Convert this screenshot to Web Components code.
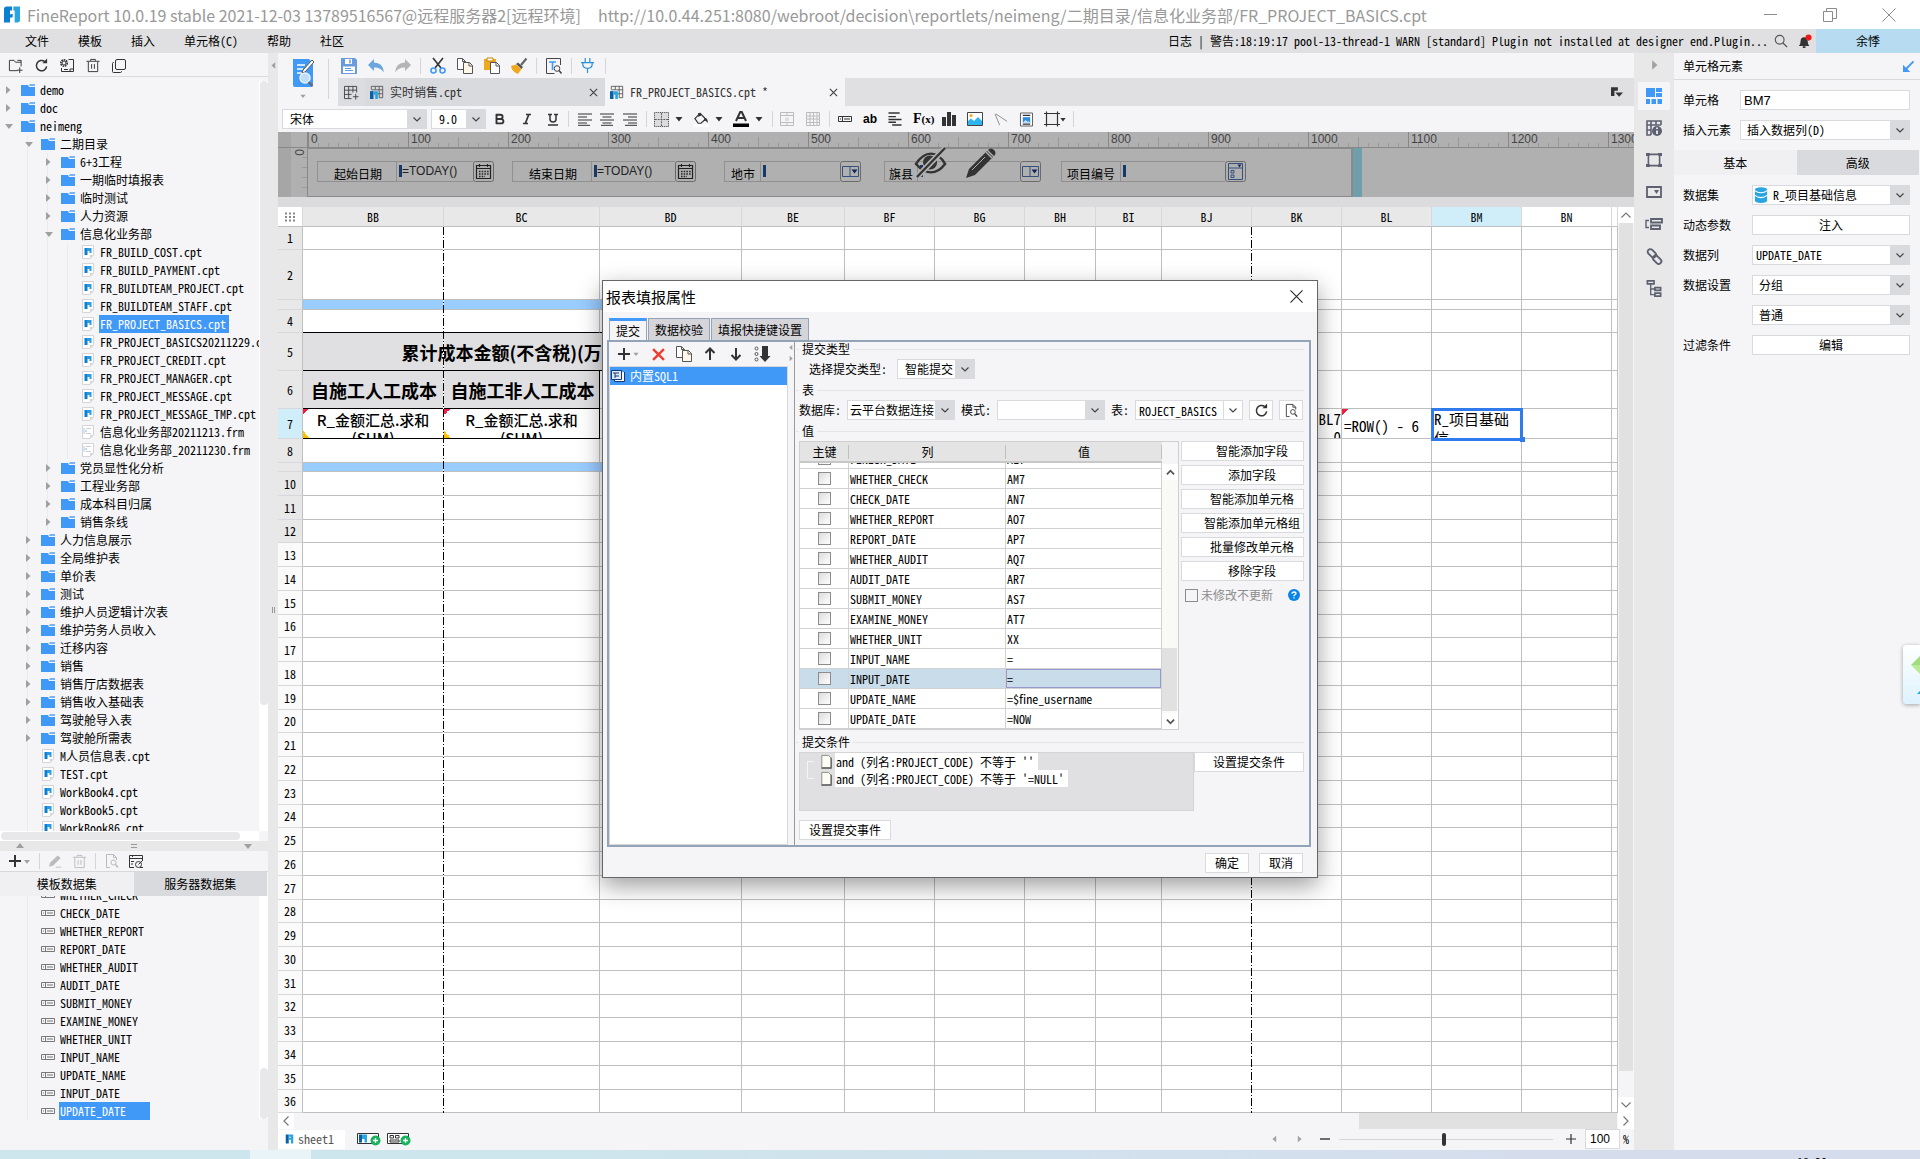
<!DOCTYPE html>
<html lang="zh-CN">
<head>
<meta charset="utf-8">
<title>FineReport</title>
<style>
html,body{margin:0;height:100%}
body{font:12px/18px "Noto Sans CJK SC","Liberation Sans",sans-serif;font-feature-settings:"hwid";color:#000;background:#f5f5f7;overflow:hidden}
</style>
</head>
<body>
<fr-app></fr-app>
<script>
const BASE = `<style>
*{box-sizing:border-box}
:host{display:block}
:host([hidden]){display:none}
button,input,select{font:inherit;color:inherit;margin:0;border-radius:0;outline:none}
.plain{background:none;border:0;padding:0;display:flex;align-items:center;justify-content:center}
.btn{height:20px;line-height:16px;background:#fff;border:1px solid #d9dadd;padding:0;text-align:center;white-space:nowrap;display:flex;align-items:center;justify-content:center}
.box{height:20px;border:1px solid #d9dadd;background:#fff;padding:0 3px;min-width:0}
.sel{display:grid;grid-template:20px / minmax(0,1fr);align-items:center}
.sel>*{grid-area:1/1}
.sel select,.sel input{appearance:none;width:100%;height:20px;border:1px solid #d9dadd;padding:0 20px 0 7px;background:linear-gradient(#d9dadd,#d9dadd) right/19px 100% no-repeat #fff}
.sel fr-icon{justify-self:end;width:20px;pointer-events:none}
.row{display:flex;align-items:center}
i{flex:none}
</style>`;
function define(name, html, init){
  const tpl = document.createElement('template');
  customElements.define(name, class extends HTMLElement{
    connectedCallback(){
      if(this.shadowRoot) return;
      tpl.innerHTML = BASE + (typeof html === 'function' ? html(this) : html);
      this.attachShadow({mode:'open'}).append(tpl.content.cloneNode(true));
      if(init) init(this, this.shadowRoot);
    }
  });
}
const ic = (n, w=16, h=16) => `<fr-icon name="${n}" w="${w}" h="${h}"></fr-icon>`;
const ib = (n, label, w=16, h=16) => `<button class="plain" aria-label="${label}">${ic(n,w,h)}</button>`;
const sel = (id, v, style='') => `<span class="sel" style="${style}"><select id="${id}" aria-label="${id}"><option>${v}</option></select>${ic('chev',8,8)}</span>`;

const S = (c,w=1) => `fill="none" stroke="${c}" stroke-width="${w}"`;
const K = '#333', B = '#4199f7', D = '#5c6070';
const ICONS = {
 logo:['0 0 12 12','<path d="M2 0h4v3H4.500v3l2-.5V8l-2 .5V12H0V2q0-2 2-2z" fill="#0b7fd0"/><path d="M7 0h5v10q0 2-2 2H8V3H7z" fill="#2ba5e0"/>'],
 fr:['0 0 12 12','<path d="M1 0h4v12H1z" fill="#0a5fa8"/><path d="M5 0h6v12H8V7H5V4h3V3H5z" fill="#2ba5e0"/>'],
 chev:['0 0 8 8',`<path d="M.5 2.500 4 6l3.500-3.500" ${S('#444',1.2)}/>`],
 chevUp:['0 0 10 10',`<path d="M.5 7.500 5 3l4.500 4.500" ${S('#777',1.2)}/>`],
 chevDn:['0 0 10 10',`<path d="M.5 2.500 5 7l4.500-4.500" ${S('#777',1.2)}/>`],
 chevUpK:['0 0 10 10',`<path d="M1 7 5 3l4 4" ${S('#555',2)}/>`],
 chevDnK:['0 0 10 10',`<path d="M1 3 5 7l4-4" ${S('#555',2)}/>`],
 chevL:['0 0 10 10',`<path d="M7.500.5 3 5l4.500 4.500" ${S('#777',1.2)}/>`],
 chevR:['0 0 10 10',`<path d="M2.500.5 7 5l-4.500 4.500" ${S('#777',1.2)}/>`],
 triR:['0 0 6 8','<path d="M1 0v8l4.500-4z" fill="#a0a0a0"/>'],
 triL:['0 0 6 8','<path d="M5 0v8L.5 4z" fill="#a0a0a0"/>'],
 triD:['0 0 8 6','<path d="M0 1h8L4 6z" fill="#a0a0a0"/>'],
 triU:['0 0 8 6','<path d="M0 5h8L4 0z" fill="#a0a0a0"/>'],
 drop:['0 0 8 6','<path d="M.5 1h7L4 5.500z" fill="#333"/>'],
 folder:['0 0 14 12',`<path d="M0 1h7l1 2h6v9H0z" fill="${B}"/><path d="M8 1.500 9 0h5v2H8.500z" fill="${B}" opacity=".7"/>`],
 cpt:['0 0 12 14',`<path d="M.5.500h11v9.500L8 13.500H.5z" fill="#fff" stroke="#d4d4d8"/><path d="M11.500 10H8v3.500z" fill="#d5d5d8"/><path d="M2.500 3h3v7h-3z" fill="#0b7fd0"/><path d="M5 3h4.500v5h-2V6H5z" fill="#2b9be8"/>`],
 frm:['0 0 12 14','<path d="M.5.500h11v9.500L8 13.500H.5z" fill="#fff" stroke="#d4d4d8"/><path d="M11.500 10H8v3.500z" fill="#d5d5d8"/><path d="M2 3v6" stroke="#a8cbe8"/><path d="M4 3.500h5M4 8.500h5" stroke="#ccc"/><path d="M4 5v2" stroke="#7db6e6"/>'],
 field:['0 0 14 6','<path d="M.5.500h13v5H.5z" fill="none" stroke="#777"/><path d="M4.500 1v4M6 3h6M2 3h1" stroke="#777"/>'],
 newFolder:['0 0 16 16',`<path d="M10 13.500H1.500v-11h5l1.500 2h6V9M10 2.500h4v2" ${S(K)}/><path d="M12.500 10v6M9.500 13h6" ${S(K)}/>`],
 refresh:['0 0 16 16',`<path d="M13.500 9A5.500 5.500 0 1 1 11.500 3.800" ${S(K,1.6)}/><path d="M9 5.500h5V.5z" fill="${K}"/>`],
 gearDoc:['0 0 16 16',`<circle cx="5" cy="5" r="3.200" ${S(K,1.6)} stroke-dasharray="1.600 .8"/><circle cx="5" cy="5" r="2" ${S(K)}/><path d="M9.500 1.500h5v12H2.500V10M5 11.500h4M11 14v-3h3.500" ${S(K)}/>`],
 trash:['0 0 16 16',`<path d="M1 3.500h14M5.500 3V1.500h5V3M3 4v10.500h10V4M6.500 6.500v5M9.500 6.500v5" ${S(K)}/>`],
 trashG:['0 0 16 16',`<path d="M1 3.500h14M5.500 3V1.500h5V3M3 4v10.500h10V4M6.500 6.500v5M9.500 6.500v5" ${S('#bbb')}/>`],
 copyBox:['0 0 16 16',`<rect x="4.500" y="1.500" width="10" height="10" rx="1.500" ${S(K)}/><path d="M3 4.500H2.500q-1 0-1 1v8q0 1 1 1h7q1 0 1-1V13" ${S(K)}/>`],
 plus:['0 0 14 14',`<path d="M7 1v12M1 7h12" ${S(K,2)}/>`],
 pencilG:['0 0 16 16','<path d="M1 14l1.500-5 8.500-8 3.500 3L6 12.500z" fill="#bbb"/><path d="M9 14.500h6" stroke="#bbb"/>'],
 docSearch:['0 0 16 16',`<path d="M6 14.500H2.500v-13h7l3 3V7M9.500 1.500v3h3" ${S('#bbb')}/><circle cx="9.500" cy="9.500" r="2.500" ${S('#bbb')}/><path d="M11.500 11.500 14 14.500" stroke="#bbb" stroke-width="1.500"/>`],
 docSearchK:['0 0 16 16',`<path d="M6 14.500H2.500v-13h7l3 3V7M9.500 1.500v3h3" ${S('#444')}/><circle cx="9.500" cy="9.500" r="2.500" ${S('#444')}/><path d="M11.500 11.500 14 14.500" stroke="#444" stroke-width="1.500"/>`],
 dbEdit:['0 0 16 16',`<path d="M6 14.500H1.500v-12h13V7M1.500 5.500h13M4 3.500h1M3 8.500h3M3 11h2" ${S(K)}/><circle cx="10.500" cy="11.500" r="3" ${S(K)}/><path d="M10.500 11.500 15 7M12 14.500h3" ${S(K)}/>`],
 save:['0 0 16 16','<path d="M0 0h14l2 2v14H0z" fill="#6a9bdc"/><path d="M4 1h7v5H4z" fill="#fff"/><path d="M9 1.500v4" stroke="#6a9bdc" stroke-width="1.500"/><path d="M2 8.500h12V15H2z" fill="#fff"/><path d="M4 10.500h6M4 12.500h8" stroke="#6a9bdc"/>'],
 undo:['0 0 16 14','<path d="M6 0v3.500q9 0 10 10Q12 8 6 8.500V12L0 6z" fill="#6aa5dc"/>'],
 redo:['0 0 16 14','<path d="M10 0v3.500q-9 0-10 10Q4 8 10 8.500V12l6-6z" fill="#b4b4b6"/>'],
 cut:['0 0 16 16',`<path d="M3 0 11 10M13 0 5 10" ${S(K,1.6)}/><circle cx="3.500" cy="12.500" r="2.500" ${S(B,1.6)}/><circle cx="12.500" cy="12.500" r="2.500" ${S(B,1.6)}/>`],
 copy:['0 0 16 16','<path d="M.5.500h5l3 3v8h-8zM5.500.500v3h3" fill="#fff" stroke="#555"/><path d="M6.500 4.500h6l3 3v8h-9z" fill="#fff8e8" stroke="#555"/><path d="M12 4.500V8h3.500" fill="none" stroke="#555"/>'],
 paste:['0 0 16 16','<path d="M0 1h12v11H0z" fill="#f0a81c"/><path d="M3 0h6v3H3z" fill="#fff" stroke="#c98200"/><path d="M6.500 4.500h6l3 3v8h-9z" fill="#fff" stroke="#555"/><path d="M12 4.500V8h3.500" fill="none" stroke="#555"/>'],
 brush:['0 0 16 16','<path d="M15.500.5 10 7" stroke="#666" stroke-width="2.200"/><path d="M7 4.500 12 9l-1.500 2L5 6z" fill="#555"/><path d="M5 6.500 10.500 11 7 16Q1 14 0 8z" fill="#f0a81c"/>'],
 preview:['0 0 16 16',`<path d="M14.500 7V.5H.5v15h8" ${S('#444')}/><path d="M3 4h7M6.500 4v8" ${S(B,1.6)}/><circle cx="11" cy="10.500" r="2.800" ${S('#444')}/><path d="M13 12.500l2.500 3" stroke="#444" stroke-width="1.500"/>`],
 plug:['0 0 14 16','<path d="M2 5h10v2q0 4-5 4T2 7zM4.500 0v5M9.500 0v5M7 11v5M0 5h14" fill="none" stroke="#2b8fd8" stroke-width="1.300"/>'],
 bigView:['0 0 22 28','<path d="M1 0h16l4 4v22q0 2-2 2H3q-2 0-2-2z" fill="#4199f7"/><path d="M5 6h8M5 10h6M5 14h5" stroke="#fff" stroke-width="1.600"/><path d="M20 1l2 2-9 10-3 1 1-3z" fill="#fff" stroke="#555"/><circle cx="13" cy="19" r="5" fill="#bfdcf8" stroke="#e8f2fc" stroke-width="1.500"/><path d="M16.500 23l4 4" stroke="#666" stroke-width="2"/>'],
 tplAdd:['0 0 16 16',`<path d="M8 14.500H.5V1.500h13V8M.5 5.500h13M5 1.500v13M9.500 1.500V8M.5 10H8" ${S('#444')}/><path d="M12.500 9.500v6M9.500 12.500h6" ${S('#444')}/>`],
 tpl:['0 0 16 16',`<path d="M1.500 5V1.500h13v13h-4M1.500 5.500h13M6 1.500v4M10.500 1.500v13M9 10h5.500" ${S('#555')}/><path d="M0 7h4v9H0z" fill="#0a5fa8"/><path d="M4 7h5v9H6v-5H4z" fill="#2ba5e0"/>`],
 x:['0 0 10 10',`<path d="M1 1l8 8M9 1 1 9" ${S('#444',1.3)}/>`],
 bigX:['0 0 14 14',`<path d="M.5.500l13 13M13.500.5.5 13.500" ${S('#222',1.1)}/>`],
 wx:['0 0 14 14',`<path d="M.5.500l13 13M13.500.5.5 13.500" ${S('#8c8c8c')}/>`],
 wmin:['0 0 14 14',`<path d="M0 6.500h13" ${S('#8c8c8c')}/>`],
 wmax:['0 0 14 14',`<path d="M.5 3.500h9v10h-9zM3.500 3V.5h10v10H10" ${S('#8c8c8c')}/>`],
 tabsMenu:['0 0 14 12','<path d="M0 0h8v4H4v6H0z" fill="#333"/><path d="M5 6h9l-4.500 5z" fill="#333"/>'],
 bold:['0 0 12 12','<path d="M2.500 1v10M2 1.800h4.500a2 2 0 0 1 0 4.200H3M3 6h4.200a2.200 2.200 0 0 1 0 4.400H2" fill="none" stroke="#333" stroke-width="1.900"/>'],
 italic:['0 0 12 12','<path d="M5 1.500h5M2 10.500h5M7.800 1.500l-3.500 9" fill="none" stroke="#333" stroke-width="1.700"/>'],
 under:['0 0 12 13','<path d="M1 1.500h4M7 1.500h4M3 1v5q0 3 3 3t3-3V1M1 12h10" fill="none" stroke="#333" stroke-width="1.500"/>'],
 alL:['0 0 14 12',`<path d="M0 .5h14M0 3.500h9M0 6.500h14M0 9.500h9M0 11.800h12" ${S(K)}/>`],
 alC:['0 0 14 12',`<path d="M0 .5h14M2.500 3.500h9M0 6.500h14M2.500 9.500h9M1 11.800h12" ${S(K)}/>`],
 alR:['0 0 14 12',`<path d="M0 .5h14M5 3.500h9M0 6.500h14M5 9.500h9M2 11.800h12" ${S(K)}/>`],
 border:['0 0 16 16',`<rect width="16" height="16" fill="#dcdcde"/><path d="M.5.500h15v15H.5z" ${S(K)} stroke-dasharray="1 1"/><path d="M8 1v14M1 8h14" ${S('#555')} stroke-dasharray="2 1"/>`],
 fill:['0 0 16 16','<path d="M1.500 7 7 1.500 13 7.500 8 12H5z" fill="none" stroke="#333" stroke-width="1.300"/><path d="M5 5V1h3v3M12 6q4 1 3 6-1-3-4-3z" fill="#333"/><path d="M0 13h16v3H0z" fill="#fff"/>'],
 fontA:['0 0 16 16','<path d="M3 10 7.200 1h1.600L13 10M5 7h6" fill="none" stroke="#333" stroke-width="2"/><path d="M0 12.500h16V16H0z" fill="#000"/>'],
 merge:['0 0 14 14',`<path d="M.5.500h13v13H.5zM.5 3.500h13M.5 10.500h13M7 .5v3M7 10.500v3" ${S('#bcbcc0')}/><path d="M5 5.500h4v3.500H5z" fill="#ddd"/>`],
 table:['0 0 14 14',`<path d="M.5.500h13v13H.5zM.5 4h13M.5 7h13M.5 10.500h13M4 .5v13M7.500.500v13M11 .5v13" ${S('#bcbcc0')}/>`],
 widget:['0 0 14 6',`<path d="M.5.500h13v5H.5zM4.500 1v4M6 3h6M2 3h1" ${S(K)}/>`],
 para:['0 0 14 15',`<path d="M0 1h12M0 5h8M0 8h14M0 11h8M4 14h10" ${S(K,1.5)}/>`],
 chart:['0 0 14 14','<path d="M0 5h4v9H0zM5 0h4v14H5zM10 3h4v11h-4z" fill="#333"/>'],
 image:['0 0 16 14','<path d="M.5.500h15v13H.5z" fill="#fff" stroke="#444"/><path d="M1 13V9l3-2.500L7 9l4-4 4 4v4z" fill="#2fb4f0"/><circle cx="4" cy="3.500" r="1.500" fill="#f5a623"/>'],
 line:['0 0 14 14',`<path d="M0 1l5 12M1 1l12 8" ${S('#888')}/>`],
 docImg:['0 0 14 15','<path d="M.5.500h13v14H.5z" fill="#fff" stroke="#555"/><path d="M3 3h8M3 12.500h8" stroke="#333" stroke-width="1.300"/><path d="M3 5h8v6H3z" fill="#2b8fe0"/><path d="M3 11l3-3 2 2 1-1 2 2z" fill="#cfe6fa"/>'],
 frame:['0 0 16 16',`<path d="M3 3h10v10H3z" fill="#f0f0f2"/><path d="M2.500.500v15M13.500.500v15M0 2.500h16M0 13.500h16" ${S(K,1.2)}/>`],
 search:['0 0 16 16',`<circle cx="6.500" cy="6.500" r="5" ${S('#555',1.3)}/><path d="M10 10l5 5" stroke="#555" stroke-width="1.600"/>`],
 bell:['0 0 16 16','<path d="M1 13q2-2 2-6 0-4 4-4t4 4q0 4 2 6zM5.500 13.500h3v2h-3z" fill="#333"/><circle cx="12" cy="3.500" r="3.500" fill="#f01818"/>'],
 cal:['0 0 21 21',`<rect x=".5" y=".5" width="20" height="20" rx="2" ${S('#6a6a6a')}/><path d="M3.500 4.500h14v13h-14zM3.500 7.500h14M6.500 3v3M14.500 3v3" ${S('#222',1.2)}/><path d="M6 10.500h10M6 13h10M6 15.500h6" stroke="#222" stroke-width="1.500" stroke-dasharray="1.500 1.200"/>`],
 combo:['0 0 21 21',`<rect x=".5" y=".5" width="20" height="20" rx="2" ${S('#6a6a6a')}/><path d="M2.500 5.500h16v10h-16zM10 5.500v10" ${S('#34507c')}/><path d="M11.500 8.500h6l-3 4z" fill="#14245c"/>`],
 tree:['0 0 21 21',`<rect x=".5" y=".5" width="20" height="20" rx="2" ${S('#6a6a6a')}/><path d="M3.500 2.500h14v16h-14zM3.500 7h14" ${S('#34507c')}/><path d="M6 9.500h3v2.500H6zM6 14h3v2.500H6z" ${S('#34507c')}/><path d="M12.500 3.500h4l-2 3z" fill="#14245c"/>`],
 eye:['0 0 34 32','<path d="M1 17Q8 6 17 6t15 11q-7 9-15 9T1 17z" fill="none" stroke="#333" stroke-width="2.600"/><circle cx="16" cy="15.500" r="7.500" fill="#333"/><path d="M32 0 2 31" stroke="#b0b0b0" stroke-width="6"/><path d="M32 0 2 31" stroke="#333" stroke-width="2.400"/>'],
 pen:['0 0 30 30','<path d="M0 30l3-9L21 3l6 6L9 27z" fill="#333"/><path d="M22 2q3-3 6 0 3 3 0 6z" fill="#333"/><path d="M20 4l6 6" stroke="#b0b0b0" stroke-width="1.500"/><path d="M6 22 19 9" stroke="#b0b0b0"/>'],
 dots:['0 0 12 10','<path d="M1 1.500h10M1 5h10M1 8.500h10" stroke="#888" stroke-width="2" stroke-dasharray="2 2"/>'],
 rCell:['0 0 16 16',`<path d="M0 0h9v9H0zM10 0h6v4h-6zM10 5h6v4h-6zM0 11h4v5H0zM5.500 11H10v5H5.500zM11.500 11H16v5h-4.500z" fill="${B}"/>`],
 rInfo:['0 0 16 16',`<path d="M15 5V1H1v14h4M1 5h14M5 1v14M10 1v4M1 10h4" ${S(D,1.6)}/><circle cx="11" cy="11" r="5" fill="${D}"/><path d="M11 10.500v3.500M11 7.500v1.500" stroke="#fff" stroke-width="1.600"/>`],
 rFloat:['0 0 16 16',`<path d="M2.500 2.500h11v11h-11z" ${S(D,1.8)}/><path d="M0 1h4v3H0zM12 1h4v3h-4zM0 12h4v3H0zM12 12h4v3h-4z" fill="${D}"/><path d="M3.500 3.500h9v9h-9z" fill="#e8e8e8"/>`],
 rWidget:['0 0 16 12',`<path d="M1 1h14v10H1z" ${S(D,1.8)}/><path d="M8 4h5l-2.500 4z" fill="${D}"/>`],
 rCond:['0 0 18 12',`<path d="M6 1h11v3.500H6zM6 7.500h9V11H6z" ${S(D,1.8)}/><path d="M4 2.500H1v7h3" ${S(D,1.4)}/>`],
 rLink:['0 0 16 16',`<rect x="1" y="2.500" width="9" height="5" rx="2.500" transform="rotate(45 5.500 5)" ${S(D,1.8)}/><rect x="6" y="8.500" width="9" height="5" rx="2.500" transform="rotate(45 10.500 11)" ${S(D,1.8)}/>`],
 rTree:['0 0 16 18',`<path d="M1 1h7v3H1zM9 8h6v3H9zM9 14h6v3H9z" ${S(D,1.8)}/><path d="M4.500 4v11.500H9M4.500 9.500H9" ${S(D,1.4)}/>`],
 expand:['0 0 12 12',`<path d="M11.500.5 3 9" ${S(B,2)}/><path d="M0 12V4l8 8z" fill="${B}"/>`],
 db:['0 0 16 18','<path d="M1 3q0-3 7-3t7 3v12q0 3-7 3t-7-3z" fill="#2ba5e0"/><path d="M1 4q3 2.500 7 2.500T15 4M1 9.500Q4 12 8 12t7-2.500" fill="none" stroke="#fff" stroke-width="1.200"/>'],
 redX:['0 0 12 12','<path d="M1 1l10 10M11 1 1 11" stroke="#f03b30" stroke-width="2.200"/>'],
 up:['0 0 12 14','<path d="M6 2v11" stroke="#333" stroke-width="2"/><path d="M1.500 6 6 1.500 10.500 6" fill="none" stroke="#333" stroke-width="2"/>'],
 down:['0 0 12 14','<path d="M6 1v11" stroke="#333" stroke-width="2"/><path d="M1.500 8 6 12.500 10.500 8" fill="none" stroke="#333" stroke-width="2"/>'],
 sort:['0 0 16 16',`<circle cx="2.500" cy="2.500" r="1.500" ${S('#555')}/><circle cx="2.500" cy="8" r="1.500" ${S('#555')}/><circle cx="2.500" cy="13.500" r="1.500" ${S('#555')}/><path d="M8 0h6v10h2.500L11 16 5.500 10H8z" fill="#333"/>`],
 sql:['0 0 14 12','<path d="M3.500 3v8.500h10V2" fill="#fff" stroke="#123a7a"/><path d="M.5.500h10v9H.5z" fill="#dfeafc" stroke="#123a7a"/><path d="M2 3h6M4 3v5M4 6h4" stroke="#123a7a"/>'],
 page:['0 0 12 16','<path d="M1.500 1.500h7l3 3v10h-10z" fill="#fdfdf4" stroke="#8c8c84"/><path d="M11.500 4v11H1" stroke="#555" fill="none" stroke-width="1.200"/>'],
 help:['0 0 12 12','<circle cx="6" cy="6" r="6" fill="#0a84e8"/><path d="M4 4.800q0-1.800 2-1.800t2 1.600q0 1-2 1.900v.7M6 8.300v1.300" fill="none" stroke="#fff" stroke-width="1.300"/>'],
 addFr:['0 0 24 14','<path d="M.5 1.500h21v10H.5z" fill="#fff" stroke="#333"/><path d="M2 2.500h3v8H2z" fill="#0a5fa8"/><path d="M5 2.500h5v8H7.500V7H5z" fill="#2ba5e0"/><circle cx="18.500" cy="8.500" r="5" fill="#16b25c"/><path d="M18.500 6v5M16 8.500h5" stroke="#fff" stroke-width="1.300"/>'],
 addFrm:['0 0 24 14','<path d="M.5 1.500h21v10H.5z" fill="#fff" stroke="#333"/><path d="M3 3.500h3.500V6H3zM8.500 3.500H12V6H8.500zM3 8h9v2H3z" fill="none" stroke="#333"/><circle cx="18.500" cy="8.500" r="5" fill="#16b25c"/><path d="M18.500 6v5M16 8.500h5" stroke="#fff" stroke-width="1.300"/>'],
 minus:['0 0 10 10',`<path d="M0 5h10" ${S(K,1.4)}/>`],
 add:['0 0 10 10',`<path d="M0 5h10M5 0v10" ${S(K,1.2)}/>`],
 gem:['0 0 9 44','<path d="M0 9l9-9v9z" fill="#a3dc7c"/><path d="M0 9h9v9z" fill="#b8ec94"/><path d="M6 38l3-3v3z" fill="#14a8f0"/>']
};
customElements.define('fr-icon', class extends HTMLElement{
  connectedCallback(){
    if(this.shadowRoot) return;
    const [vb, body] = ICONS[this.getAttribute('name')];
    this.attachShadow({mode:'open'}).innerHTML = `<style>:host{display:inline-flex;align-items:center;justify-content:center;flex:none}svg{display:block;overflow:visible}</style><svg aria-hidden="true" width="${this.getAttribute('w')}" height="${this.getAttribute('h')}" viewBox="${vb}">${body}</svg>`;
  }
});

define('title-bar', `<style>
:host{display:flex;align-items:center;height:29px;background:#fff;padding:0 24px 0 4px;color:#999;font:16px/28px "Noto Sans CJK SC",sans-serif;font-feature-settings:normal;white-space:pre}
.t{margin:0 17px 0 7px}.w{margin-left:auto;gap:45px}
</style>${ic('logo',16,17)}<span class="t">FineReport 10.0.19 stable 2021-12-03 13789516567@远程服务器2[远程环境]</span><span>http://10.0.44.251:8080/webroot/decision\\reportlets/neimeng/二期目录/信息化业务部/FR_PROJECT_BASICS.cpt</span>
<div class="row w">${ib('wmin','最小化',14,14)}${ib('wmax','还原',14,14)}${ib('wx','关闭',14,14)}</div>`);

define('menu-bar', `<style>
:host{display:flex;align-items:center;height:24px;background:#e0e0e2;white-space:pre}
nav{display:flex;gap:29px;padding-left:25px}
.log{margin-left:auto}
.ics{gap:10px;padding:0 4px 0 6px}
.user{width:104px;height:24px;background:#b7dcf2}
</style><nav>${['文件','模板','插入','单元格(C)','帮助','社区'].map(t=>`<button class="plain">${t}</button>`).join('')}</nav>
<span class="log">日志 | 警告:18:19:17 pool-13-thread-1 WARN [standard] Plugin not installed at designer end.Plugin...</span>
<div class="row ics">${ib('search','搜索',14,14)}${ib('bell','消息',14,15)}</div><button class="plain user">余悸</button>`);

const ROW = `<style>
.r{display:flex;align-items:center;height:18px;flex:none;white-space:nowrap;padding-left:calc(var(--l)*20px);background:repeating-linear-gradient(to right,transparent 0 7px,#ebebee 7px 8px,transparent 8px 20px) 20px 0/calc(var(--l)*20px) 100% no-repeat}
.r>i{width:21px;display:flex;padding-left:5px}.r>fr-icon{width:14px}
.r>span{margin-left:4px;padding:0 3px 0 1px;height:18px}
.on>span{background:#4199f7;color:#fff}
.vs{width:9px;flex:none;background:#fff;display:flex}.vs>b{flex:1;background:#e8e8ea;border-radius:4px;margin-left:1px}
</style>`;
const TREE = `0r demo|0r doc|0d neimeng|1d 二期目录|2r 6+3工程|2r 一期临时填报表|2r 临时测试|2r 人力资源|2d 信息化业务部|3c FR_BUILD_COST.cpt|3c FR_BUILD_PAYMENT.cpt|3c FR_BUILDTEAM_PROJECT.cpt|3c FR_BUILDTEAM_STAFF.cpt|3c*FR_PROJECT_BASICS.cpt|3c FR_PROJECT_BASICS20211229.cpt|3c FR_PROJECT_CREDIT.cpt|3c FR_PROJECT_MANAGER.cpt|3c FR_PROJECT_MESSAGE.cpt|3c FR_PROJECT_MESSAGE_TMP.cpt|3f 信息化业务部20211213.frm|3f 信息化业务部_20211230.frm|2r 党员显性化分析|2r 工程业务部|2r 成本科目归属|2r 销售条线|1r 人力信息展示|1r 全局维护表|1r 单价表|1r 测试|1r 维护人员逻辑计次表|1r 维护劳务人员收入|1r 迁移内容|1r 销售|1r 销售厅店数据表|1r 销售收入基础表|1r 驾驶舱导入表|1r 驾驶舱所需表|1c M人员信息表.cpt|1c TEST.cpt|1c WorkBook4.cpt|1c WorkBook5.cpt|1c WorkBook86.cpt`.split('|').map(s=>{
  const k=s[1], arrow={r:ic('triR',6,8),d:ic('triD',8,6)}[k]||'', icon=k=='c'?ic('cpt',12,14):k=='f'?ic('frm',12,14):ic('folder',14,12);
  return `<div class="r ${s[2]=='*'?'on':''}" style="--l:${s[0]}"><i>${arrow}</i>${icon}<span>${s.slice(3)}</span></div>`;}).join('');
define('file-tree', `${ROW}<style>
:host{display:flex;flex-direction:column;min-height:0;background:#f5f5f7}
.tb{height:24px;padding:2px 0 0 2px;border-bottom:1px solid #dadadc;flex:none}
.tb button{width:26px}
.mid{flex:1;display:flex;min-height:0}
.list{flex:1;min-width:0;overflow:hidden;padding-top:4px}
.vs{padding-bottom:126px;margin-top:4px}
.hs{height:10px;flex:none;background:#fff;margin-right:9px;padding:1px 19px 1px 1px;display:flex}.hs b{flex:1;background:#e8e8ea;border-radius:4px}
</style>
<div class="row tb">${ib('newFolder','新建文件夹',17,15)}${ib('refresh','刷新',15,15)}${ib('gearDoc','模板管理')}${ib('trash','删除',16,15)}${ib('copyBox','复制')}</div>
<div class="mid"><div class="list">${TREE}</div><div class="vs"><b></b></div></div><div class="hs"><b></b></div>`);

define('dataset-panel', `${ROW}<style>
:host{display:flex;flex-direction:column;height:309px;flex:none;background:#f5f5f7}
.split{height:10px;background:#e8e8e8;justify-content:space-between;padding:0 16px;flex:none;color:#999}
.split b{width:6px;height:4px;border:solid #999;border-width:1px 0}
.tb{height:21px;padding-left:8px;border-bottom:1px solid #d8d8da;flex:none}
.s{width:1px;height:16px;background:#d5d5d8;margin:0 8px}
.tabs{display:grid;grid-template-columns:1fr 1fr;margin-right:1px;flex:none;height:24px}
.tabs button{background:#f0f0f2}.tabs button+button{background:#d9dadd}
.mid{flex:1;display:flex;min-height:0}
.list{flex:1;display:flex;flex-direction:column;justify-content:flex-end;overflow:hidden;padding-bottom:30px;min-width:0}
.vs{padding:172px 0 0;margin-bottom:31px}
.on>span{width:91px}
</style>
<div class="row split">${ic('triU',8,6)}<b></b>${ic('triD',8,6)}</div>
<div class="row tb">${ib('plus','添加',14,14)}<i style="width:2px"></i>${ic('triD',6,5)}<i class="s" style="margin:0 8px 0 9px"></i>${ib('pencilG','编辑',14,15)}<i style="width:10px"></i>${ib('trashG','删除',15,15)}<i class="s"></i>${ib('docSearch','预览')}<i style="width:8px"></i>${ib('dbEdit','连接')}</div>
<div class="tabs" role="tablist"><button class="plain" role="tab">模板数据集</button><button class="plain" role="tab">服务器数据集</button></div>
<div class="mid"><div class="list">${['WHETHER_CHECK','CHECK_DATE','WHETHER_REPORT','REPORT_DATE','WHETHER_AUDIT','AUDIT_DATE','SUBMIT_MONEY','EXAMINE_MONEY','WHETHER_UNIT','INPUT_NAME','UPDATE_NAME','INPUT_DATE','UPDATE_DATE'].map((t,i)=>`<div class="r ${i==12?'on':''}" style="--l:1"><i></i>${ic('field',14,6)}<span>${t}</span></div>`).join('')}</div><div class="vs"><b></b></div></div>`);

define('editor-toolbar', `<style>
:host{display:flex;flex-direction:column;background:#f5f5f7}
.top{display:grid;grid-template-columns:60px minmax(0,1fr);height:53px}
.view{display:grid;grid-template-columns:50px 1px;align-items:start;padding-top:6px}
.view>span{display:flex;flex-direction:column;align-items:center;gap:7px}
.view>b{width:1px;height:40px;background:#d5d5d8}
.t1{height:25px;padding-left:3px;gap:11px}
.s{width:1px;height:16px;background:#d5d5d8}
.tabs{display:flex;height:28px;background:#e0e0e2}
.tabs>span{display:flex;align-items:center;gap:6px;padding:0 7px 0 5px;width:240px;background:#d9dadd;color:#333}
.tabs>span button{margin-left:auto}
.tabs .new{width:27px;background:#dcdde0;height:28px}
.tabs .cur{background:#f5f5f7}
.menu{margin:0 11px 0 auto}
.fmt{height:26px;padding-left:4px}
.ab{font:bold 12px/18px "Liberation Sans";font-feature-settings:normal}.fx{font:bold 14px/18px "Liberation Serif";font-feature-settings:normal}
.fx small{font-size:11px}
</style>
<div class="top"><div class="view"><span>${ib('bigView','模板视图',22,28)}${ic('triD',6,4)}</span><b></b></div>
<div><div class="row t1">${ib('save','保存',16,16)}${ib('undo','撤销',16,14)}${ib('redo','重做',16,14)}<i class="s" style="margin:0 -2px"></i>${ib('cut','剪切')}${ib('copy','复制')}${ib('paste','粘贴')}${ib('brush','格式刷')}<i class="s" style="margin:0 -2px"></i>${ib('preview','预览')}<i class="s" style="margin:0 -2px"></i>${ib('plug','插件',13,15)}<i class="s"></i></div>
<div class="tabs"><button class="plain new" aria-label="新建模板">${ic('tplAdd',15,15)}</button><span>${ic('tpl',14,14)}实时销售.cpt${ib('x','关闭',9,9)}</span><span class="cur">${ic('tpl',14,14)}FR_PROJECT_BASICS.cpt *${ib('x','关闭',9,9)}</span><button class="plain menu" aria-label="模板列表">${ic('tabsMenu',12,11)}</button></div></div></div>
<div class="row fmt">${sel('字体','宋体','width:145px')}<i style="width:4px"></i>${sel('字号','9.0','width:55px')}
${[['bold','加粗',12,12,8],['italic','斜体',12,12,15],['under','下划线',12,13,14],0,['alL','左对齐',14,13,9],['alC','居中',14,13,8],['alR','右对齐',14,13,9],0,['border','边框',15,15,7,1],['fill','填充',16,15,10,1],['fontA','字体颜色',16,16,10,1],0,['merge','合并',14,14,7],['table','取消合并',14,14,12],0,['widget','控件',14,6,8]].map(a=>a?`<i style="width:${a[4]}px"></i>${ib(a[0],a[1],a[2],a[3])}${a[5]?'<i style="width:6px"></i>'+ic('drop',8,6):''}`:'<i class="s" style="margin-left:9px"></i>').join('')}
<i style="width:11px"></i><button class="plain ab">ab</button><i style="width:11px"></i>${ib('para','富文本',14,14)}<i style="width:11px"></i><button class="plain fx">F<small>(x)</small></button><i style="width:8px"></i>${ib('chart','图表',14,14)}<i style="width:11px"></i>${ib('image','图片',16,14)}<i style="width:12px"></i>${ib('line','斜线',13,13)}<i style="width:12px"></i>${ib('docImg','子报表',13,15)}<i style="width:11px"></i>${ib('frame','悬浮元素',16,16)}${ic('drop',6,5)}<i class="s" style="margin-left:7px"></i></div>`);

const P = (l,lw,v,fw,icon,gap,pr) => `<label class="row" style="margin-left:${gap}px"><span style="width:${lw}px;padding-right:${pr}px">${l}</span><b></b><input value="${v}" style="width:${fw-5}px">${ic(icon,21,21)}</label>`;
define('param-pane', `<style>
:host{display:grid;grid-template:16px 49px / 30px minmax(0,1fr);background:#b0b0b0;border-bottom:10px solid #dbdbde;overflow:hidden}
.c{background:linear-gradient(to right,#a6a6a6 0 13px,transparent 13px);border-bottom:1px solid #888;border-right:1px solid #888}
.h{display:flex;overflow:hidden;border-bottom:1px solid #888}
.h span{flex:none;width:100px;height:16px;padding-left:3px;font:12px/15px "Liberation Sans";font-feature-settings:normal;color:#444;background:linear-gradient(#888,#888) 0 0/1px 100% no-repeat,linear-gradient(#999,#999) 50px 5px/1px 11px no-repeat,repeating-linear-gradient(to right,#999 0 1px,transparent 1px 10px) 0 11px/100% 5px no-repeat}
.v{background:linear-gradient(to right,#a6a6a6 0 13px,transparent 13px);display:flex;justify-content:flex-end;border-right:1px solid #888}
.v span{writing-mode:vertical-rl;width:17px;font:12px/17px "Liberation Sans";color:#444;padding-top:1px;background:repeating-linear-gradient(to bottom,transparent 0 9px,#999 9px 10px) right/5px 100% no-repeat}
.p{position:relative;display:flex}
.form{width:1045px;flex:none;border:solid #8a8a8a;border-width:1px 2px 1px 0;padding:12px 0 0 9px;display:flex;align-items:flex-start}
.t{width:9px;background:#6f9faa;height:100%}
label{height:21px}
label span{height:21px;line-height:24px;border:1px solid #909090;display:block;text-align:right;white-space:nowrap}
label b{width:5px;height:21px;border:solid #909090;border-width:1px 0;background:linear-gradient(#173a6a,#173a6a) 2px 3px/3px 12px no-repeat}
input{height:21px;border:solid #909090;border-width:1px 0;background:none;padding:0 0 2px 0;font:12px "Liberation Sans";font-feature-settings:normal;color:#222;min-width:0}
.o{position:absolute;display:flex;gap:19px;left:607px;top:0}
</style>
<div class="c"></div><div class="h">${Array.from({length:14},(_,i)=>`<span>${i*100}</span>`).join('')}</div>
<div class="v"><span>0</span></div>
<div class="p"><div class="form">${P('起始日期',80,'=TODAY()',76,'cal',0,14)}${P('结束日期',80,'=TODAY()',83,'cal',18,14)}${P('地市',37,'',79,'combo',28,5)}${P('旗县',34,'',102,'combo',23,4)}${P('项目编号',60,'',104,'tree',20,5)}</div><div class="t"></div>
<div class="o">${ic('eye',32,30)}${ic('pen',30,30)}</div></div>`);

const COLS = [['BB',141],['BC',156],['BD',142],['BE',103],['BF',90],['BG',90],['BH',71],['BI',66],['BJ',90],['BK',90],['BL',90],['BM',90],['BN',90],['',6]];
const HS = [23,50,10,23,38,38,30,24,9,24,24,23,24,24,24,23,24,24,24,23,24,24,24,23,24,24,24,23,24,24,24,23,24,24,24,23];
define('report-sheet', ()=>{
  const cell = (r,c) => {
    if(r==3||r==9) return c<9?'<td class="band"></td>':'<td></td>';
    if(r==5){ if(c==0) return '<td class="h5" colspan="3">累计成本金额(不含税)(万元)</td>'; if(c<3) return ''; }
    if(r==6&&c<2) return `<td class="h6">${['自施工人工成本','自施工非人工成本'][c]}</td>`;
    if(r==7&&c<2) return '<td class="v7"><div>R_金额汇总.求和<br>(SUM)</div></td>';
    if(r==7&&c==9) return '<td class="k"><div>BL7<br>0</div></td>';
    if(r==7&&c==10) return '<td class="l"><div>=ROW() - 6</div></td>';
    if(r==7&&c==11) return '<td class="m"><div>R_项目基础<br>信</div></td>';
    return '<td></td>';
  };
  return `<style>
:host{display:flex;flex:1;min-height:0;background:#f5f5f7}
.view{flex:1;position:relative;overflow:hidden;min-width:0}
table{border-collapse:separate;border-spacing:0;table-layout:fixed;width:1340px;background:#fff}
td,th{padding:0;border:solid #bfbfbf;border-width:0 1px 1px 0;overflow:hidden}
th{font-weight:400;line-height:16px;background:#e8e8e8;border-color:#d8d8dc}
thead th{border-bottom-color:#bfbfbf;height:20px;padding-top:1px}
tbody th{border-right-color:#bfbfbf;padding-left:0}
tbody tr:nth-child(n+13) th{background:#fafafa}
thead th:first-child,thead th:nth-child(n+14){background:#fff}
thead th:nth-child(13),tbody tr:nth-child(7) th{background:#cfeefa}
td div{overflow:hidden}
.band{background:#99ccff;border-right-color:#99ccff}
.h5,.h6{background:#e0e0e2;font:bold 18px/24px "Noto Sans CJK SC",sans-serif;font-feature-settings:normal;text-align:center;border-color:#000;white-space:nowrap}
.h5{padding-right:16px}
.h6{padding-left:2px}
tr:nth-child(4) td:nth-child(-n+4){border-bottom-color:#000}
.v7{border-color:#000;font:500 15px/18px "Noto Sans CJK SC",sans-serif;font-feature-settings:normal;text-align:center;white-space:nowrap;background:linear-gradient(135deg,#f02040 50%,transparent 50%) 0 0/6px 6px no-repeat,linear-gradient(45deg,#ffc000 50%,transparent 50%) 0 100%/7px 7px no-repeat}
.v7 div{height:29px;padding-top:2px}
.k div,.m div,.l div{font-size:15px;line-height:18px;height:29px}
.k div{text-align:right;padding-top:1px}
.l div{padding:7px 0 0 2px;line-height:19px}.l{background:linear-gradient(135deg,#f02040 50%,transparent 50%) 0 0/6px 6px no-repeat}
.m div{padding:0 0 0 2px;line-height:19px}
.guide{position:absolute;top:20px;bottom:0;width:1px;background:repeating-linear-gradient(#000 0 8px,#fff 8px 10px,#000 10px 11px,#fff 11px 13px)}
.pick{position:absolute;left:1153px;top:201px;width:92px;height:33px;border:3px solid #2f7bee}
.pick b{position:absolute;right:-5px;bottom:-4px;width:5px;height:5px;background:#2f7bee}
.sb{width:16px;display:flex;flex-direction:column}
.sb button{height:16px;background:#fff}.sb b{flex:1;background:#e1e1e1;margin:0 1px 26px}
</style><div class="view"><table><colgroup><col style="width:25px">${COLS.map(c=>`<col style="width:${c[1]}px">`).join('')}</colgroup>
<thead><tr><th>${ic('dots',12,10)}</th>${COLS.map(c=>`<th>${c[0]}</th>`).join('')}</tr></thead>
<tbody>${HS.map((h,i)=>`<tr style="height:${h}px"><th>${i==2||i==8?'':i+1}</th>${COLS.map((_,c)=>cell(i+1,c)).join('')}</tr>`).join('')}</tbody></table>
<i class="guide" style="left:165px"></i><i class="guide" style="left:973px"></i><div class="pick"><b></b></div></div>
<div class="sb">
<button class="plain" aria-label="上">${ic('chevUp',10,10)}</button><b></b><button class="plain" aria-label="下">${ic('chevDn',10,10)}</button></div>`;});

define('sheet-footer', `<style>
:host{display:flex;flex-direction:column;background:#f5f5f7;height:37px}
.h{display:flex;height:16px}.h button{width:16px;background:#fff}.h b{margin-left:auto;width:258px;background:#e1e1e1;margin-right:1px}
.t{height:20px}
.tab{display:flex;align-items:center;gap:4px;width:67px;height:19px;padding-left:7px;background:#fff;color:#555}
.z{margin-left:auto;gap:9px}
input[type=range]{appearance:none;width:214px;height:14px;margin-right:4px;background:linear-gradient(#d5d5d8,#d5d5d8) center/100% 1px no-repeat}
input[type=range]::-webkit-slider-thumb{appearance:none;width:4px;height:13px;background:#333;border-radius:2px}
.n{width:35px;font-family:"Liberation Sans";font-feature-settings:normal;padding:0 4px}
</style><div class="h"><button class="plain" aria-label="左">${ic('chevL',10,10)}</button><b></b><button class="plain" aria-label="右">${ic('chevR',10,10)}</button></div>
<div class="row t"><span class="tab">${ic('fr',9,10)}sheet1</span><i style="width:12px"></i>${ib('addFr','新增报表',24,14)}<i style="width:6px"></i>${ib('addFrm','新增表单',24,14)}
<div class="row z">${ib('triL','上一页',5,8)}<i style="width:2px"></i>${ib('triR','下一页',5,8)}<i></i>${ib('minus','缩小',10,10)}<input type="range" min="0" max="100" value="49" aria-label="缩放">${ib('add','放大',10,10)}<input class="box n" value="100" aria-label="缩放比例"></div><span style="width:14px;padding-left:3px">%</span></div>`);

define('side-rail', `<style>
:host{display:flex;flex-direction:column;align-items:center;width:40px;background:#e8e8e8;padding-top:8px}
button{width:32px;height:28px;margin-bottom:4px}.c{height:8px;margin-bottom:13px}.on{background:#f5f5f7}
</style><button class="plain c" aria-label="收起">${ic('triR',7,10)}</button>${[['rCell',16,16],['rInfo',16,16],['rFloat',16,16],['rWidget',16,12],['rCond',18,12],['rLink',17,17],['rTree',16,17]].map((a,i)=>`<button class="plain ${i?'':'on'}" aria-label="${a[0]}">${ic(...a)}</button>`).join('')}`);

const F = (l,c) => `<div class="f"><label for="${l}">${l}</label>${c}</div>`;
define('property-panel', `<style>
:host{display:flex;flex-direction:column;gap:10px;width:246px;background:#f5f5f7}
header{display:flex;align-items:center;justify-content:space-between;height:27px;padding:0 6px 0 9px;border-bottom:1px solid #dadadc}
.f{display:grid;grid-template-columns:69px minmax(0,1fr);align-items:center;padding:0 10px 0 9px;height:20px}
.top .f{grid-template-columns:57px minmax(0,1fr)}.top{display:grid;gap:10px}
.tabs{display:grid;grid-template-columns:1fr 1fr;height:25px;margin-right:1px}
.tabs button{background:#f0f0f2}.tabs button+button{background:#d9dadd}
.db{display:grid;grid-template:20px/minmax(0,1fr);align-items:center}.db>*{grid-area:1/1}.db>fr-icon{justify-self:start;margin-left:2px;z-index:1}
.db .sel{--p:20px}.n .sel{--p:3px}.sel select{padding-left:var(--p,6px)}
.box{font:13px "Liberation Sans";font-feature-settings:normal}
</style><header>单元格元素${ib('expand','展开',11,11)}</header>
<div class="top">${F('单元格','<input class="box" id="单元格" value="BM7">')}${F('插入元素',sel('插入元素','插入数据列(D)'))}</div>
<div class="tabs" role="tablist"><button class="plain" role="tab">基本</button><button class="plain" role="tab">高级</button></div>
${F('数据集',`<div class="db">${ic('db',14,16)}${sel('数据集','R_项目基础信息')}</div>`)}
${F('动态参数','<button class="btn" id="动态参数">注入</button>')}
${F('数据列',`<div class="n">${sel('数据列','UPDATE_DATE')}</div>`)}
${F('数据设置',sel('数据设置','分组'))}
<div class="f"><span></span>${sel('显示方式','普通')}</div>
${F('过滤条件','<button class="btn" id="过滤条件">编辑</button>')}`);

const ROWS = [['FINISH_DATE','AL7'],['WHETHER_CHECK','AM7'],['CHECK_DATE','AN7'],['WHETHER_REPORT','AO7'],['REPORT_DATE','AP7'],['WHETHER_AUDIT','AQ7'],['AUDIT_DATE','AR7'],['SUBMIT_MONEY','AS7'],['EXAMINE_MONEY','AT7'],['WHETHER_UNIT','XX'],['INPUT_NAME','='],['INPUT_DATE','='],['UPDATE_NAME','=$fine_username'],['UPDATE_DATE','=NOW']];
define('submit-table', `<style>
:host{display:flex;width:380px;height:289px;border:1px solid #cfcfcf}
.w{flex:1;overflow:hidden}
table{border-collapse:separate;border-spacing:0;table-layout:fixed;width:100%;background:#fff}
th{position:sticky;top:0;z-index:1;height:21px;padding:0;font-weight:400;line-height:16px;background:linear-gradient(#c0c0b8,#c0c0b8) right 3px/1px 14px no-repeat #e4e4e4;border-bottom:2px solid #c8c8c8}
td{height:20px;padding:0 0 0 1px;line-height:16px;border:solid #d2d2d2;border-width:0 1px 1px 0}
td:first-child{padding:2px 0 0}
input{appearance:none;display:block;width:13px;height:13px;margin:0 auto 2px;border:1px solid #8c8c8c;background:linear-gradient(135deg,#dcdcdc,#fff)}
.on td{background:#c9dcea}.on td:last-child{box-shadow:inset 0 0 0 1px #9898cc}
.sb{width:16px;display:flex;flex-direction:column;padding-top:22px;background:linear-gradient(#f5f5f7 22px,#f9f9f6 22px)}
.sb button{height:16px;background:#fff}.sb b{flex:1;margin:168px 1px 2px 0;background:#e1e1e1}
</style><div class="w"><table><colgroup><col style="width:49px"><col style="width:157px"><col></colgroup><thead><tr><th>主键</th><th>列</th><th>值</th></tr></thead><tbody>${ROWS.map((r,i)=>`<tr class="${i==11?'on':''}"><td><input type="checkbox" aria-label="主键 ${r[0]}"></td><td>${r[0]}</td><td>${r[1]}</td></tr>`).join('')}</tbody></table></div>
<div class="sb"><button class="plain" aria-label="上">${ic('chevUpK',9,9)}</button><b></b><button class="plain" aria-label="下">${ic('chevDnK',9,9)}</button></div>`,
(el,root)=>{ root.querySelector('.w').scrollTop = 9999; });

define('submit-dialog', `<style>
:host{position:absolute;left:602px;top:280px;width:716px;background:#f5f5f7;border:1px solid #666;box-shadow:0 8px 22px rgba(0,0,0,.38)}
header{display:flex;align-items:center;justify-content:space-between;height:31px;background:#fff;padding:0 14px 0 3px;font-size:15px}
.tabs{display:flex;gap:1px;padding:6px 0 0 6px}
.tabs button{height:22px;padding:1px 6px 0;background:#d4d4d9;border:1px solid #94a4b8;border-bottom:0;line-height:20px}
.tabs .cur{background:#f5f5f7;border-top:3px solid #4199f7;padding:0 6px 4px}
.frame{display:flex;margin:0 6px 0 4px;border:2px solid #94a4b8;height:507px}
.left{width:179px;display:flex;flex-direction:column}
.tb{height:24px;padding-left:8px}
.list{flex:1;background:#fff;border:1px solid #d8d8da}
.it{display:flex;align-items:center;gap:5px;height:18px;background:#4199f7;color:#fff;padding-left:1px}
.sp{width:7px;border-right:1px solid #999;display:flex;flex-direction:column;gap:4px;padding-top:2px}
.right{flex:1;min-width:0;padding:0 5px 0 4px}
h3{display:flex;align-items:center;gap:3px;margin:0 0 3px -3px;height:14px;line-height:14px;font-size:12px;font-weight:400}
h3:before,h3:after{content:"";width:3px;height:1px;background:#e4e4e8}h3:after{flex:1}
.fr{height:20px;gap:6px;margin-bottom:4px}
.mid{display:flex;gap:2px;margin-bottom:5px}
.bs{flex:1;display:grid;grid-auto-rows:20px;gap:4px;align-content:start}
.bs .btn{padding-left:19px}
.ck{display:flex;align-items:center;color:#8c8c8c;height:20px;gap:3px;padding:0 4px 0 4px;white-space:nowrap}
.ck input{appearance:none;width:13px;height:13px;border:1px solid #8c8c8c;margin:0}
.ck fr-icon{margin-left:auto}
.cond{display:flex;margin-bottom:9px;align-items:flex-start}
.cb{flex:1;height:59px;background:#e0e0e2;border:1px solid #d4d4d6;display:flex}
.cb>i{width:7px;height:18px;margin:8px 6px 0 7px;border:1px solid #f4f4f6;border-right:0}
.cb p{display:flex;align-items:center;height:17px;margin:0;white-space:pre}.cb p span{background:#fff;padding:0 4px 0 1px;line-height:17px;height:17px;margin-left:3px}
.k select{padding-left:2px}.e input{background:linear-gradient(#d9dadd,#d9dadd) right 18px top/1px 100% no-repeat #fff;padding-left:3px}
footer{display:flex;justify-content:flex-end;gap:10px;padding:6px 14px 4px}footer .btn{width:44px}
</style>
<header>报表填报属性${ib('bigX','关闭',13,13)}</header>
<div class="tabs" role="tablist"><button class="cur" role="tab">提交</button><button role="tab">数据校验</button><button role="tab">填报快捷键设置</button></div>
<div class="frame"><div class="left"><div class="row tb">${ib('plus','添加',14,14)}<i style="width:2px"></i>${ic('triD',6,4)}<i style="width:13px"></i>${ib('redX','删除',13,13)}<i style="width:11px"></i>${ib('copy','复制',16,16)}<i style="width:12px"></i>${ib('up','上移',12,14)}<i style="width:14px"></i>${ib('down','下移',12,14)}<i style="width:12px"></i>${ib('sort','排序',16,16)}</div>
<div class="list"><div class="it">${ic('sql',14,12)}内置SQL1</div></div></div>
<div class="sp">${ic('triL',4,7)}${ic('triR',4,7)}</div>
<div class="right"><h3>提交类型</h3><div class="row fr"><label for="t" style="margin:0 4px 0 10px">选择提交类型:</label><span class="sel" style="width:78px"><select id="t"><option>智能提交</option></select>${ic('chev',8,8)}</span></div>
<h3>表</h3><div class="row fr"><label for="d">数据库:</label><span class="sel k" style="width:108px"><select id="d"><option>云平台数据连接</option></select>${ic('chev',8,8)}</span><label for="m">模式:</label><span class="sel" style="width:108px"><select id="m"><option></option></select>${ic('chev',8,8)}</span><label for="b">表:</label><span class="sel e" style="width:108px"><input id="b" value="ROJECT_BASICS">${ic('chev',8,8)}</span><button class="btn" style="width:24px" aria-label="刷新">${ic('refresh',15,15)}</button><button class="btn" style="width:24px" aria-label="预览">${ic('docSearchK',15,15)}</button></div>
<h3>值</h3><div class="mid"><submit-table></submit-table><div class="bs">${['智能添加字段','添加字段','智能添加单元格','智能添加单元格组','批量修改单元格','移除字段'].map(t=>`<button class="btn">${t}</button>`).join('')}<label class="ck"><input type="checkbox" disabled>未修改不更新${ic('help',12,12)}</label></div></div>
<h3>提交条件</h3><div class="cond"><div class="cb"><i></i><div><p>${ic('page',12,15)}<span>and (列名:PROJECT_CODE) 不等于 ''</span></p><p>${ic('page',12,15)}<span>and (列名:PROJECT_CODE) 不等于 '=NULL'</span></p></div></div><button class="btn" style="width:110px">设置提交条件</button></div>
<button class="btn" style="width:92px">设置提交事件</button></div></div>
<footer><button class="btn">确定</button><button class="btn">取消</button></footer>`);

define('fr-app', `<style>
:host{display:flex;flex-direction:column;height:100vh;position:relative;overflow:hidden}
main{flex:1;display:flex;min-height:0}
.side{width:268px;flex:none;display:flex;flex-direction:column;min-height:0}file-tree{flex:1}
.sp{width:10px;flex:none;background:#e8e8e8;display:flex;flex-direction:column;align-items:center;padding-top:8px}
.sp b{width:3px;height:6px;border:solid #999;border-width:0 1px;margin:auto 0}
.main{flex:1;min-width:0;display:flex;flex-direction:column}
side-rail,property-panel{flex:none}
.task{height:9px;flex:none;overflow:hidden;display:flex;background:linear-gradient(to right,#cde5ec 0 30%,#d5dded 80%);padding-left:250px}
.task b{width:61px;background:#e8f4f8}
.task span{margin:5px 93px 0 auto;line-height:14px;white-space:nowrap}
.float{position:absolute;right:0;top:645px;width:17px;height:59px;border-radius:4px 0 0 4px;background:linear-gradient(#fff,#ddf3fe);box-shadow:0 1px 4px rgba(0,0,0,.35);padding:11px 0 0 8px}
</style><title-bar></title-bar><menu-bar></menu-bar>
<main><div class="side"><file-tree></file-tree><dataset-panel></dataset-panel></div><div class="sp">${ic('triL',5,9)}<b></b></div>
<div class="main"><editor-toolbar></editor-toolbar><param-pane></param-pane><report-sheet></report-sheet><sheet-footer></sheet-footer></div>
<side-rail></side-rail><property-panel></property-panel></main>
<div class="task"><b></b><span>18:20</span></div>
<submit-dialog></submit-dialog><div class="float">${ic('gem',9,44)}</div>`);
</script>
</body>
</html>
